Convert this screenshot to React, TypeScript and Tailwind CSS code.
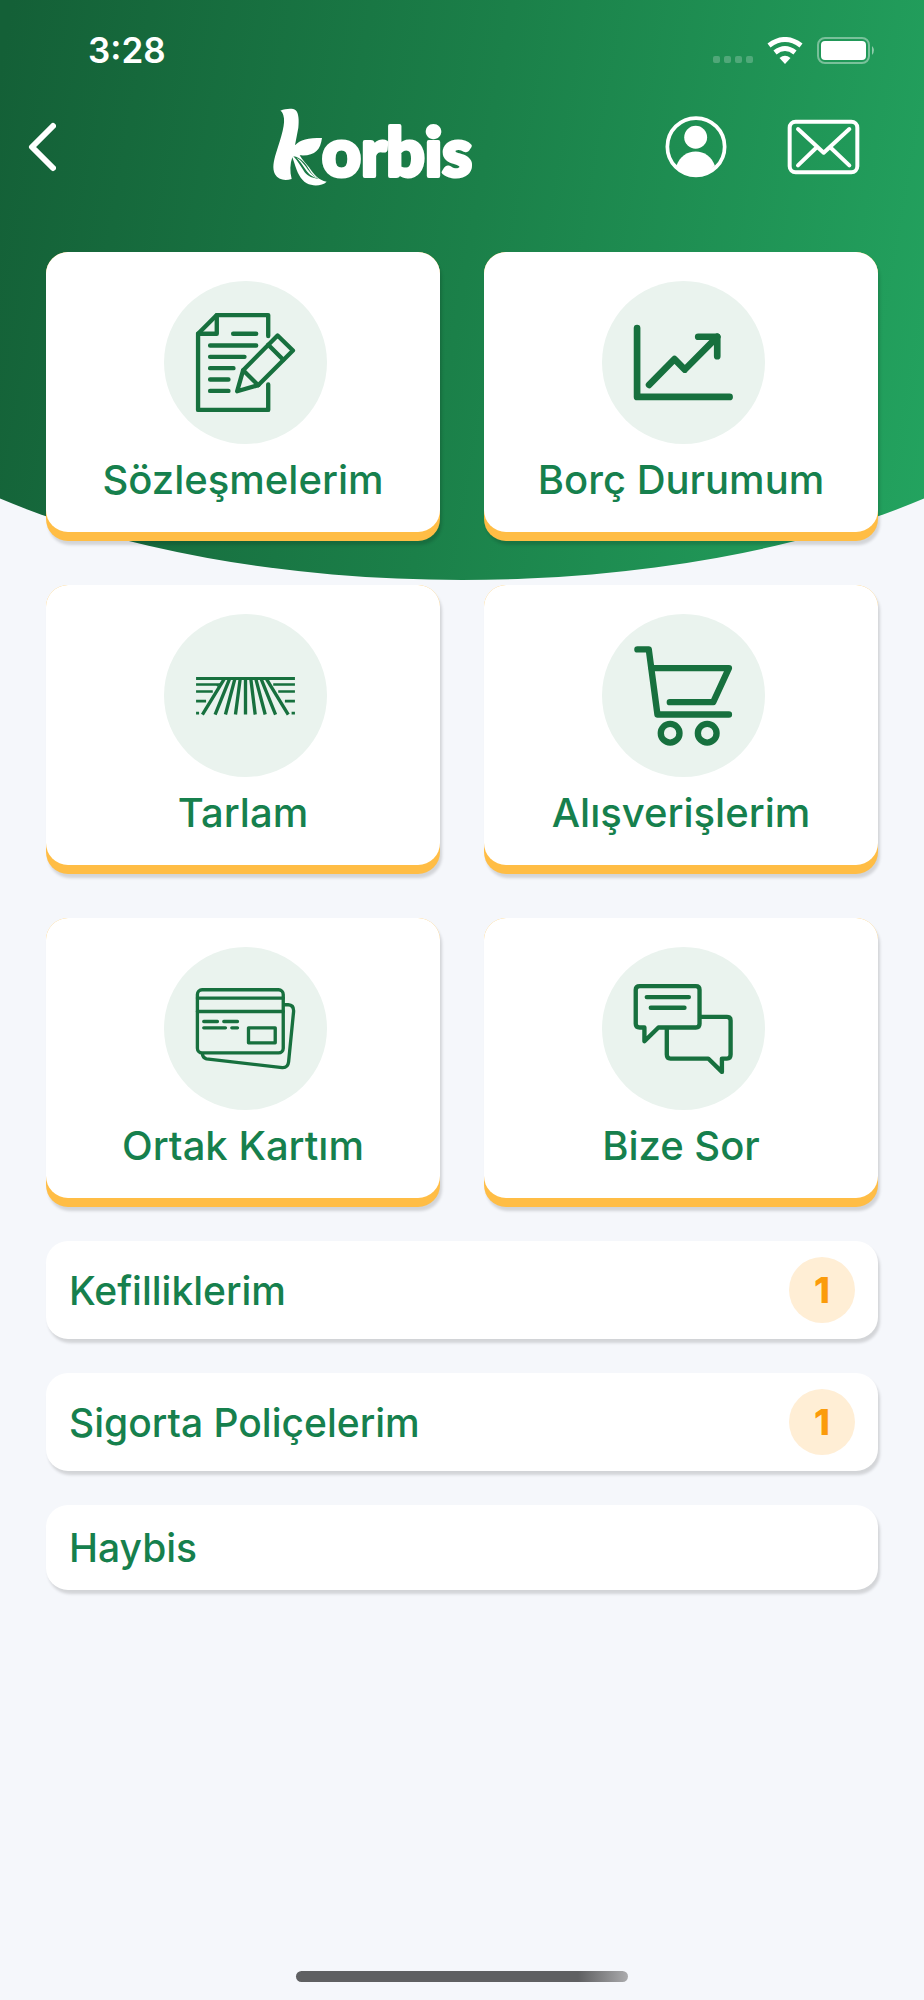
import type { ReactNode } from "react";

const shadow = "shadow-[2px_4px_3px_rgba(0,0,0,0.14)]";

function DocumentIcon() {
    return (
        <svg className="size-full" viewBox="42 32 488 488" fill="none" stroke="#17703e" strokeWidth="13" strokeLinecap="round" strokeLinejoin="round" aria-hidden="true">
            <path d="M354 197V134H200L144 190V418H354V342" />
            <path d="M200 134V190H144" />
            <path d="M249 190H318M180 225H318M180 259H283M180 293H250M180 327H235M180 361H235" />
            <path d="M382 195L428 240L324 344L261 362L279 299Z" />
            <path d="M354 223L399 268M279 299L324 344" />
        </svg>
    );
}

function ChartIcon() {
    return (
        <svg className="size-full" viewBox="37 32 488 488" fill="none" stroke="#17703e" strokeWidth="20" strokeLinecap="round" strokeLinejoin="round" aria-hidden="true">
            <path d="M142 173V379H419" />
            <path d="M178 343L254 266L285 297L382 199" />
            <path d="M325 199H382V257" />
        </svg>
    );
}

function FieldIcon() {
    return (
        <svg className="size-full" viewBox="42 41 488 488" fill="none" stroke="#17703e" strokeWidth="9" aria-hidden="true">
            <path d="M138 234H434" />
            <path d="M138 252H203L199 256M369 252H434M138 273H188M384 273H434M138 302H168M404 302H434" strokeWidth="8" />
            <path d="M138 338H147M424 338H434" strokeWidth="8" />
            <path d="M222 236L157 342M238 236L195 342M254 236L226 342M270 236L256 342M286 236V342M302 236L315 342M317 236L345 342M333 236L376 342M349 236L414 342" strokeWidth="10" />
        </svg>
    );
}

function CartIcon() {
    return (
        <svg className="size-full" viewBox="37 41 488 488" fill="none" stroke="#17703e" strokeWidth="19" strokeLinecap="round" strokeLinejoin="round" aria-hidden="true">
            <path d="M143 147H177L203 342H417" />
            <path d="M186 203H417L370 305H240" />
            <circle cx="241" cy="398" r="28" />
            <circle cx="352" cy="398" r="28" />
        </svg>
    );
}

function CardsIcon() {
    return (
        <svg className="size-full" viewBox="42 36 488 488" fill="none" stroke="#17703e" strokeWidth="10" strokeLinecap="round" strokeLinejoin="round" aria-hidden="true">
            <rect x="142" y="164" width="257" height="189" rx="14" />
            <path d="M142 189H399M142 229H399" />
            <path d="M161 259H202M221 259H262M161 278H226M245 278H262" />
            <rect x="295" y="278" width="80" height="45" />
            <path d="M403 209H414Q431 210 430 229L415 380Q413 398 396 397L169 371Q158 368 157 357" />
        </svg>
    );
}

function ChatIcon() {
    return (
        <svg className="size-full" viewBox="37 36 488 488" fill="none" stroke="#17703e" strokeWidth="13" strokeLinecap="round" strokeLinejoin="round" aria-hidden="true">
            <path d="M150 153H318Q329 153 329 164V266Q329 277 318 277H206L164 318V277H150Q138 277 138 266V164Q138 153 150 153Z" />
            <path d="M171 186H297M183 218H284" />
            <path d="M331 245H411Q422 245 422 256V358Q422 370 411 370H396V410L355 370H242Q231 370 231 358V280" />
        </svg>
    );
}

function Logo() {
    return (
        <svg className="h-[78px] w-[202px] overflow-visible" viewBox="54 39 606 234" fill="#fff" role="img" aria-label="korbis">
            <path d="M79 47C96 41 116 39 125 46C135 55 135 79 133 98L123 151C138 134 162 129 204 129C199 167 181 184 137 181C144 194 155 204 165 217C181 239 193 256 218 260C205 273 177 275 158 265C139 253 130 233 121 204L115 187C108 207 107 229 113 252C92 259 72 254 63 238C54 220 59 198 66 175C82 126 96 84 88 61C86 54 84 50 79 47Z" />
            <path d="M118 184C132 199 142 216 152 232C163 245 176 250 193 251C169 239 164 216 150 202C139 191 129 185 118 184Z" fill="#1a7a45" />
            <path d="M128 188C148 199 157 219 171 235Q179 244 190 250C172 246 162 235 152 220Q141 202 128 188Z" />
            <text x="204" y="243" fontSize="202" fontWeight="900" fontFamily="Lato, sans-serif" stroke="#fff" strokeWidth="12" strokeLinejoin="round">orbis</text>
        </svg>
    );
}

function StatusBar() {
    return (
        <div className="flex h-9 items-center pr-12 pl-22">
            <span className="text-[35px] leading-9 font-semibold text-white">3:28</span>
            <svg className="ml-auto h-[27px] w-[164px]" viewBox="0 0 164 27" fill="#fff" aria-hidden="true">
                <g opacity="0.22">
                    <rect x="1" y="19" width="7" height="7" rx="2" />
                    <rect x="12" y="19" width="7" height="7" rx="2" />
                    <rect x="23" y="19" width="7" height="7" rx="2" />
                    <rect x="34" y="19" width="7" height="7" rx="2" />
                </g>
                <g fill="none" stroke="#fff" strokeWidth="5">
                    <path d="M57 8.500Q73 -3.500 89 8.500" />
                    <path d="M63 15.500Q73 7.500 83 15.500" />
                </g>
                <path d="M67.500 21Q73 16.500 78.500 21L73 27Z" />
                <rect x="106" y="1" width="51" height="25" rx="7" fill="none" stroke="#fff" strokeWidth="2" opacity="0.4" />
                <rect x="109" y="4" width="45" height="19" rx="4" />
                <path d="M160 9Q164 13 160 18Z" opacity="0.5" />
            </svg>
        </div>
    );
}

function TopBar() {
    return (
        <header className="mt-10 flex h-[78px] items-center pr-16 pl-7">
            <button aria-label="Geri">
                <svg className="h-[50px] w-7" viewBox="0 0 28 50" fill="none" stroke="#fff" strokeWidth="6" strokeLinecap="round" strokeLinejoin="round">
                    <path d="M25 4L4 25L25 46" />
                </svg>
            </button>
            <div className="ml-[26%]">
                <Logo />
            </div>
            <div className="ml-auto flex items-center gap-15">
                <button aria-label="Profil">
                    <svg className="size-[62px]" viewBox="74 290 184 184">
                        <circle cx="166" cy="381" r="85" fill="none" stroke="#fff" strokeWidth="11" />
                        <circle cx="165" cy="353" r="34" fill="#fff" />
                        <path d="M108 437C118 410 139 395 165 395S212 410 222 437Q200 467 165 467T108 437Z" fill="#fff" />
                    </svg>
                </button>
                <button aria-label="Mesajlar">
                    <svg className="h-14 w-[73px]" viewBox="442 298 217 168" fill="none" stroke="#fff" strokeWidth="12" strokeLinecap="round" strokeLinejoin="round">
                        <rect x="449" y="306" width="203" height="152" rx="18" />
                        <path d="M474 328L551 399L628 328M474 437L528 385M628 437L573 385" />
                    </svg>
                </button>
            </div>
        </header>
    );
}

function MenuCard({ title, icon }: { title: string; icon: ReactNode }) {
    return (
        <button className={`rounded-[22px] bg-[#ffbd45] pb-[9px] ${shadow}`}>
            <span className="flex flex-col items-center rounded-[22px] bg-white pt-[29px] pb-6">
                <span className="ml-1 size-[163px] rounded-full bg-[#eaf3ee]">{icon}</span>
                <span className="mt-[7px] text-[40px] leading-[57px] font-medium text-[#16804d]">{title}</span>
            </span>
        </button>
    );
}

function MenuRow({ title, count }: { title: string; count?: number }) {
    return (
        <button className={`flex items-center justify-between rounded-[22px] bg-white px-[23px] text-left ${count ? "py-4" : "py-[14px]"} ${shadow}`}>
            <span className="text-[39px] leading-[57px] font-medium text-[#16804d]">{title}</span>
            {count && (
                <span className="flex size-[66px] items-center justify-center rounded-full bg-[#ffeed5] text-4xl font-extrabold text-[#fb9b0b]">{count}</span>
            )}
        </button>
    );
}

export default function App() {
    return (
        <div className="grid min-h-screen overflow-hidden bg-[#f5f7fb] font-[Inter,sans-serif]">
            <div className="flex h-[580px] justify-center overflow-hidden [grid-area:1/1]">
                <div className="w-[144%] shrink-0 rounded-b-[50%] bg-linear-[100deg] from-[#146037] from-15% via-[#1b8049] to-[#23a35f] to-85%" />
            </div>
            <div className="z-10 flex flex-col pt-8 [grid-area:1/1]">
                <StatusBar />
                <TopBar />
                <main className="mt-[66px] px-[46px]">
                    <nav className="grid grid-cols-2 gap-11">
                        <MenuCard title="Sözleşmelerim" icon={<DocumentIcon />} />
                        <MenuCard title="Borç Durumum" icon={<ChartIcon />} />
                        <MenuCard title="Tarlam" icon={<FieldIcon />} />
                        <MenuCard title="Alışverişlerim" icon={<CartIcon />} />
                        <MenuCard title="Ortak Kartım" icon={<CardsIcon />} />
                        <MenuCard title="Bize Sor" icon={<ChatIcon />} />
                    </nav>
                    <div className="mt-[34px] flex flex-col gap-[34px]">
                        <MenuRow title="Kefilliklerim" count={1} />
                        <MenuRow title="Sigorta Poliçelerim" count={1} />
                        <MenuRow title="Haybis" />
                    </div>
                </main>
                <div className="mx-auto mt-auto mb-[18px] h-[11px] w-[36%] rounded-full bg-linear-to-r from-[#5f6062] from-85% to-[#ababad]" />
            </div>
        </div>
    );
}
